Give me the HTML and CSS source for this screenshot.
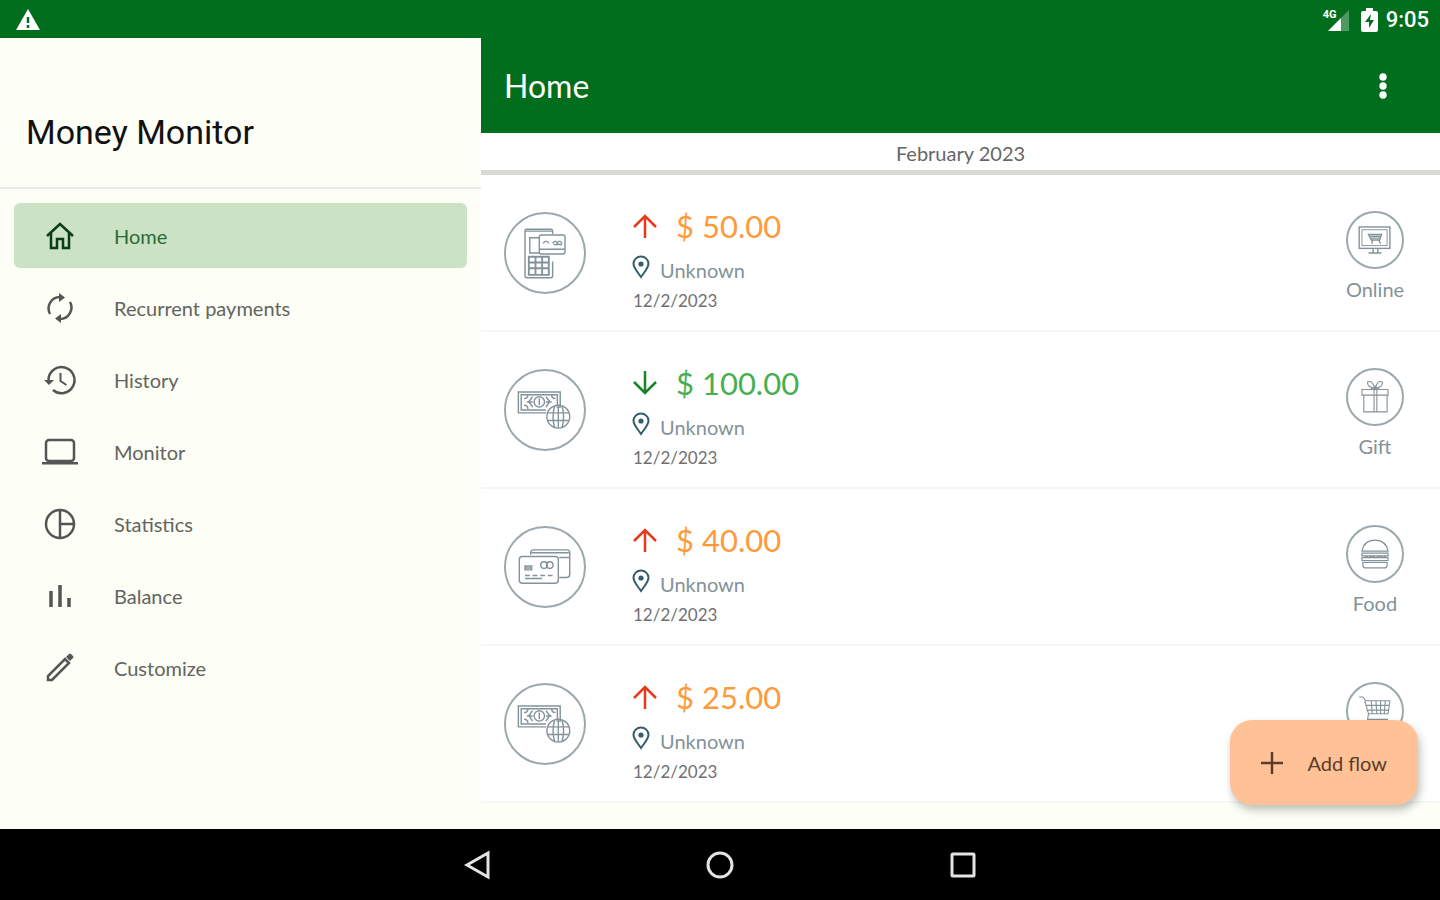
FILE: index.html
```
<!DOCTYPE html>
<html lang="en">
<head>
<meta charset="utf-8">
<meta name="viewport" content="width=device-width, initial-scale=1">
<title>Money Monitor</title>
<link rel="stylesheet" href="styles.css">
</head>
<body>
<svg class="sprite" aria-hidden="true">
  <symbol id="pin" viewBox="0 0 18 24"><path d="M9 22C6 17.500 1.500 13 1.500 8.800a7.500 7.300 0 0 1 15 0C16.500 13 12 17.500 9 22z" fill="none" stroke="currentColor" stroke-width="2"/><circle cx="9" cy="9" r="2.600" fill="currentColor"/></symbol>
  <symbol id="up" viewBox="0 0 26 26"><path d="M13 25V3M2 14 13 3l11 11" fill="none" stroke="currentColor" stroke-width="2.500"/></symbol>
  <symbol id="down" viewBox="0 0 26 26"><path d="M13 1v22M2 12l11 11 11-11" fill="none" stroke="currentColor" stroke-width="2.500"/></symbol>
  <symbol id="cash" viewBox="0 0 82 82"><g fill="none" stroke="currentColor" stroke-width="1.500"><path d="M53 38h4V22H13v22h29"/><path d="M42 41H16V25h38v11"/><circle cx="35" cy="32.500" r="5.500"/><path d="M19 29q4 0 4-4M19 36q4 0 4 4M52 29q-4 0-4-4M22 32.500h6M42 32.500h6M35 29v7M28 27l-4 5 4 6M42 27l4 5-4 6"/><circle cx="55" cy="48" r="12"/><path d="M44 44h22M44 52h22M51 37q-3 11 0 22M59 37q3 11 0 22M55 37v22"/></g></symbol>
</svg>
<div class="device">
  <header class="status">
    <svg width="26" height="22" viewBox="0 0 26 22" role="img" aria-label="Warning"><path d="M13 0 25 21H1z" fill="#fff"/><path d="M13 8v6M13 16v3" stroke="#006e1c" stroke-width="2.500"/></svg>
    <div class="status-right">
      <span class="signal"><span class="network">4G</span><svg width="22" height="21" viewBox="0 0 22 21" aria-hidden="true"><path d="M22 0v21H1z" fill="#fff" opacity=".3"/><path d="M14 8v13H1z" fill="#fff"/></svg></span>
      <svg width="17" height="24" viewBox="0 0 17 24" role="img" aria-label="Battery charging"><path d="M5 0h7v3h3q2 0 2 2v17q0 2-2 2H2q-2 0-2-2V5q0-2 2-2h3z" fill="#fff"/><path d="M10 6 4 14h4v6l5-8H9z" fill="#006e1c"/></svg>
      <time class="clock">9:05</time>
    </div>
  </header>
  <div class="app">
    <aside class="drawer">
      <h1 class="brand">Money Monitor</h1>
      <nav class="menu" aria-label="Sections">
        <a class="menu-item active" href="#home"><svg class="icon" viewBox="0 0 36 36"><path d="M5 18 18 6l13 12M9 15v15h6v-9h6v9h6V15" fill="none" stroke="currentColor" stroke-width="2.500"/></svg>Home</a>
        <a class="menu-item" href="#recurrent"><svg class="icon" viewBox="0 0 36 36"><path d="M8 24A11.500 11.500 0 0 1 18 7M28 12a11.500 11.500 0 0 1-10 17" fill="none" stroke="currentColor" stroke-width="2.500"/><path d="m17 3 6 4.500-6 4.500zM19 24l-6 4.500 6 4.500z" fill="currentColor"/></svg>Recurrent payments</a>
        <a class="menu-item" href="#history"><svg class="icon" viewBox="0 0 36 36"><path d="M6.500 18a13 13 0 1 1 4.500 10" fill="none" stroke="currentColor" stroke-width="2.500"/><path d="M2 18h10l-5 5z" fill="currentColor"/><path d="M18.500 11v8l6 4" fill="none" stroke="currentColor" stroke-width="2"/></svg>History</a>
        <a class="menu-item" href="#monitor"><svg class="icon" viewBox="0 0 36 36"><rect x="4" y="6" width="28" height="21" rx="3" fill="none" stroke="currentColor" stroke-width="2.500"/><path d="M0 28h36v2.500H0z" fill="currentColor"/></svg>Monitor</a>
        <a class="menu-item" href="#statistics"><svg class="icon" viewBox="0 0 36 36"><path d="M18 4v28M18 18h14" stroke="currentColor" stroke-width="2.500"/><circle cx="18" cy="18" r="14" fill="none" stroke="currentColor" stroke-width="2.500"/></svg>Statistics</a>
        <a class="menu-item" href="#balance"><svg class="icon" viewBox="0 0 36 36"><path d="M9 13v16M18 7v22M27 20v9" stroke="currentColor" stroke-width="3.500"/></svg>Balance</a>
        <a class="menu-item" href="#customize"><svg class="icon" viewBox="0 0 36 36"><path d="M6 30v-4L23 9l4 4L10 30z" fill="none" stroke="currentColor" stroke-width="2.500"/><path d="m24 7 3-3q1-1 2 0l2 2q1 1 0 2l-3 3z" fill="currentColor"/></svg>Customize</a>
      </nav>
    </aside>
    <main class="content">
      <div class="toolbar">
        <h2 class="page-title">Home</h2>
        <button class="more" type="button" aria-label="More options"><svg width="10" height="28" viewBox="0 0 10 28" fill="#fff"><circle cx="5" cy="5" r="3.700"/><circle cx="5" cy="14" r="3.700"/><circle cx="5" cy="23" r="3.700"/></svg></button>
      </div>
      <h3 class="month">February 2023</h3>
      <ul class="flows">
        <li class="flow">
          <svg class="method" viewBox="0 0 82 82"><g fill="none" stroke="currentColor" stroke-width="1.500"><path d="M49 50v15q0 2-2 2H22q-2 0-2-2V18q0-2 2-2h25q2 0 2 2v3"/><path d="M20 18h29M35 25H25v16h10"/><rect x="35" y="22" width="27" height="20" rx="2" fill="#fff"/><path d="M35 37h27M39 31q3-5 6 0M49 31q3-5 5 0q2-5 5 0M50 32h9"/><path d="M24 45h21v19H24zM24 51h21M24 57h21M31 45v19M38 45v19" stroke-width="2"/></g></svg>
          <div class="details">
            <div class="amount expense"><svg class="arrow"><use href="#up"/></svg>$ 50.00</div>
            <div class="place"><svg class="pin"><use href="#pin"/></svg>Unknown</div>
            <time class="date">12/2/2023</time>
          </div>
          <div class="category"><svg class="badge" viewBox="0 0 58 58"><g fill="none" stroke="currentColor" stroke-width="1.500"><rect x="12" y="15" width="33" height="23"/><rect x="15" y="18" width="27" height="17" stroke-width="1"/><path d="M27 38v5M32 38v5M22 43h14"/><path d="M22 23h14l-2 6H25zM24 25h11M25 27h10M26 29v4M33 29l2 4"/></g></svg>Online</div>
        </li>
        <li class="flow">
          <svg class="method"><use href="#cash"/></svg>
          <div class="details">
            <div class="amount income"><svg class="arrow"><use href="#down"/></svg>$ 100.00</div>
            <div class="place"><svg class="pin"><use href="#pin"/></svg>Unknown</div>
            <time class="date">12/2/2023</time>
          </div>
          <div class="category"><svg class="badge" viewBox="0 0 58 58"><g fill="none" stroke="currentColor" stroke-width="1.200"><path d="M15 21h28v6H15zM17 27v18h25V27M28 21v24M31 21v24"/><path d="M29 20q-9-2-8-7 5-3 8 7 3-10 8-7 1 5-8 7zM24 21l5-3 5 3"/></g></svg>Gift</div>
        </li>
        <li class="flow">
          <svg class="method" viewBox="0 0 82 82"><g fill="none" stroke="currentColor" stroke-width="1.500"><path d="M26 28v-2q0-3 3-3h35q3 0 3 3v23q0 3-3 3h-8M27 26h39M56 31h11"/><rect x="14" y="30" width="41" height="28" rx="3"/><circle cx="40" cy="39" r="3.500"/><circle cx="46" cy="39" r="3.500"/><path d="M20 40h7v4h-7zM20 42h7M20 50h5M28 50h5M36 50h5M44 50h5M20 53h18"/></g></svg>
          <div class="details">
            <div class="amount expense"><svg class="arrow"><use href="#up"/></svg>$ 40.00</div>
            <div class="place"><svg class="pin"><use href="#pin"/></svg>Unknown</div>
            <time class="date">12/2/2023</time>
          </div>
          <div class="category"><svg class="badge" viewBox="0 0 58 58"><g fill="none" stroke="currentColor" stroke-width="1.300"><path d="M15 26q2-12 14-12t14 12zM15 28h28v3H15zM15 33h28v3H15zM16 38h26v3q0 3-3 3H19q-3 0-3-3zM18 31l4 2 4-2 4 2 4-2 4 2 3-2"/></g></svg>Food</div>
        </li>
        <li class="flow">
          <svg class="method"><use href="#cash"/></svg>
          <div class="details">
            <div class="amount expense"><svg class="arrow"><use href="#up"/></svg>$ 25.00</div>
            <div class="place"><svg class="pin"><use href="#pin"/></svg>Unknown</div>
            <time class="date">12/2/2023</time>
          </div>
          <div class="category"><svg class="badge" viewBox="0 0 58 58"><g fill="none" stroke="currentColor" stroke-width="1.200"><path d="M12 14h4l3 4h26l-2 14H22l-4-14M19 23h25M20 28h23M25 18l1 14M30 18l1 14M35 18v14M40 18l-1 14M22 32l-1 6h22"/><circle cx="25" cy="42" r="2"/><circle cx="38" cy="42" r="2"/></g></svg></div>
        </li>
      </ul>
      <button class="fab" type="button"><svg width="22" height="22" viewBox="0 0 22 22" aria-hidden="true"><path d="M11 0v22M0 11h22" stroke="currentColor" stroke-width="2.500"/></svg>Add flow</button>
    </main>
  </div>
  <footer class="system">
    <button type="button" aria-label="Back"><svg width="30" height="30" viewBox="0 0 30 30"><path d="M26 3v24L5 15z"/></svg></button>
    <button type="button" aria-label="Home screen"><svg width="30" height="30" viewBox="0 0 30 30"><circle cx="15" cy="15" r="12"/></svg></button>
    <button type="button" aria-label="Recent apps"><svg width="30" height="30" viewBox="0 0 30 30"><rect x="4" y="4" width="22" height="22" rx="1"/></svg></button>
  </footer>
</div>
</body>
</html>
```
FILE: styles.css
```
* { box-sizing: border-box; }

body {
  margin: 0;
  font-family: Lato, "Open Sans", sans-serif;
  color: #666;
  background: #fdfef5;
}

h1, h2, h3, ul { margin: 0; padding: 0; font-weight: 400; }
ul { list-style: none; }
button { border: 0; padding: 0; background: none; font: inherit; color: inherit; cursor: pointer; }
svg { display: block; flex: none; }
.sprite { position: absolute; width: 0; height: 0; }

.device { min-height: 100vh; display: flex; flex-direction: column; }

.status {
  height: 38px;
  padding: 2px 11px 0 15px;
  display: flex;
  align-items: center;
  justify-content: space-between;
  background: #006e1c;
  color: #fff;
}
.status-right { display: flex; align-items: center; gap: 12px; }
.signal { display: flex; align-items: flex-end; position: relative; padding-left: 4px; }
.network { position: absolute; left: 0; top: 0; font: 700 11px/10px Roboto, sans-serif; }
.clock { font: 500 22px/24px Roboto, sans-serif; margin-left: -4px; }

.app { flex: 1; display: grid; grid-template-columns: 481fr 959fr; }

.brand {
  height: 151px;
  padding: 70px 26px 0;
  border-bottom: 2px solid #e8e9e4;
  font: 400 34px/48px Roboto, sans-serif;
  color: #111;
}
.menu { display: flex; flex-direction: column; gap: 7px; padding: 14px; }
.menu-item {
  height: 65px;
  padding: 0 28px;
  display: flex;
  align-items: center;
  gap: 36px;
  border-radius: 6px;
  font-size: 20px;
  color: #626460;
  text-decoration: none;
}
.menu-item.active { background: #cbe2c5; color: #2c6a38; }
.icon { width: 36px; height: 36px; color: #555; }
.active .icon { color: #0b3d16; }

.content { position: relative; display: flex; flex-direction: column; }
.toolbar {
  height: 95px;
  padding: 0 52px 0 23px;
  display: flex;
  align-items: center;
  justify-content: space-between;
  background: #006e1c;
  color: #fff;
}
.page-title { font: 400 32px/36px Lato, sans-serif; }
.month {
  height: 42px;
  border-bottom: 5px solid #d8d9d3;
  background: #fff;
  font-size: 20px;
  line-height: 40px;
  text-align: center;
}

.flow {
  height: 157px;
  padding: 36px 35px 0 23px;
  display: flex;
  align-items: flex-start;
  background: #fff;
  border-bottom: 2px solid #f6f6f4;
  color: #84929a;
}
.method { width: 82px; height: 82px; margin-top: 1px; border: 2px solid #9ca8ad; border-radius: 50%; }
.details { flex: 1; padding-left: 46px; }
.amount { display: flex; align-items: center; gap: 18px; font-size: 31px; line-height: 30px; }
.expense { color: #ff9a3a; }
.expense .arrow { color: #e8391c; }
.income { color: #48ae52; }
.income .arrow { color: #158424; }
.arrow { width: 26px; height: 26px; }
.place { display: flex; align-items: center; gap: 10px; margin-top: 12px; font-size: 20px; line-height: 34px; }
.pin { width: 18px; height: 24px; margin-bottom: 6px; color: #355d6b; }
.date { display: block; padding-left: 1px; font-size: 17px; line-height: 28px; color: #707070; }
.category {
  width: 60px;
  display: flex;
  flex-direction: column;
  align-items: center;
  font-size: 20px;
  line-height: 40px;
}
.badge { width: 58px; height: 58px; border: 2px solid #9ca8ad; border-radius: 50%; }

.fab {
  position: absolute;
  right: 22px;
  bottom: 24px;
  height: 85px;
  padding: 0 31px;
  display: flex;
  align-items: center;
  gap: 24px;
  border-radius: 22px;
  background: #ffc297;
  box-shadow: 2px 5px 8px rgba(0, 0, 0, 0.25);
  font-size: 20px;
  color: #5a3c28;
}

.system {
  height: 71px;
  display: flex;
  align-items: center;
  justify-content: center;
  gap: 213px;
  background: #000;
}
.system svg { fill: none; stroke: #e4e4e4; stroke-width: 3; }
```
